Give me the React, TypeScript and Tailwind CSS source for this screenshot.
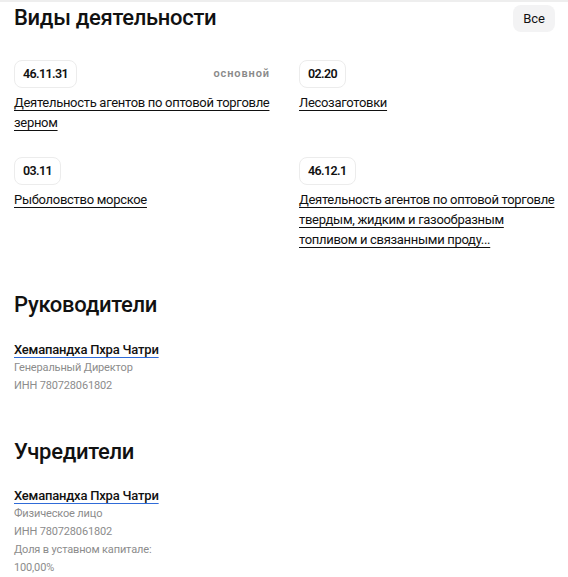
import React from "react";

const activities = [
  { code: "46.11.31", main: true, text: "Деятельность агентов по оптовой торговле зерном" },
  { code: "02.20", main: false, text: "Лесозаготовки" },
  { code: "03.11", main: false, text: "Рыболовство морское" },
  {
    code: "46.12.1",
    main: false,
    text: "Деятельность агентов по оптовой торговле твердым, жидким и газообразным топливом и связанными проду...",
  },
];

export default function App() {
  return (
    <div className="w-[568px] min-h-[577px] bg-white border-t-2 border-[#eeeeee] text-[#111] font-['Roboto','Noto_Sans',sans-serif]">
      <div className="pl-[14px] pr-[13px]">
        <div className="flex items-center justify-between h-[32px]">
          <h2 className="text-[22px] leading-[28px] font-medium tracking-[-0.3px]">Виды деятельности</h2>
          <button className="h-[27px] px-[10px] rounded-lg bg-[#f3f3f4] text-[13px] leading-[27px] text-[#111]">Все</button>
        </div>

        <div className="mt-[26px] grid grid-cols-[256px_256px] gap-x-[29px] gap-y-[24px]">
          {activities.map((a) => (
            <div key={a.code}>
              <div className="flex items-center justify-between">
                <span className="h-[28px] px-[8px] border border-[#ececec] rounded-lg text-[12.5px] leading-[26px] font-semibold tracking-[-0.6px]">
                  {a.code}
                </span>
                {a.main && (
                  <span className="text-[11px] font-semibold text-[#8a8a8a] tracking-[0.9px]">основной</span>
                )}
              </div>
              <a href="#" className="block mt-[5px] text-[13px] leading-[20px] underline underline-offset-[3px] decoration-[#111] tracking-[-0.3px]">
                {a.text}
              </a>
            </div>
          ))}
        </div>

        <h2 className="mt-[41px] text-[22px] leading-[28px] font-medium tracking-[-0.3px]">Руководители</h2>
        <div className="mt-[22px]">
          <a href="#" className="block text-[13px] leading-[18px] font-medium underline underline-offset-[3px] decoration-[#2f6bd8] w-fit tracking-[-0.2px]">
            Хемапандха Пхра Чатри
          </a>
          <div className="text-[11px] leading-[18px] text-[#8c8c8c] tracking-[-0.15px]">Генеральный Директор</div>
          <div className="text-[11px] leading-[18px] text-[#8c8c8c] tracking-[-0.15px]">ИНН 780728061802</div>
        </div>

        <h2 className="mt-[43px] text-[22px] leading-[28px] font-medium tracking-[-0.3px]">Учредители</h2>
        <div className="mt-[21px]">
          <a href="#" className="block text-[13px] leading-[18px] font-medium underline underline-offset-[3px] decoration-[#2f6bd8] w-fit tracking-[-0.2px]">
            Хемапандха Пхра Чатри
          </a>
          <div className="text-[11px] leading-[18px] text-[#8c8c8c] tracking-[-0.15px]">Физическое лицо</div>
          <div className="text-[11px] leading-[18px] text-[#8c8c8c] tracking-[-0.15px]">ИНН 780728061802</div>
          <div className="text-[11px] leading-[18px] text-[#8c8c8c] tracking-[-0.15px]">Доля в уставном капитале:</div>
          <div className="text-[11px] leading-[18px] text-[#8c8c8c] tracking-[-0.15px]">100,00%</div>
        </div>
      </div>
    </div>
  );
}
